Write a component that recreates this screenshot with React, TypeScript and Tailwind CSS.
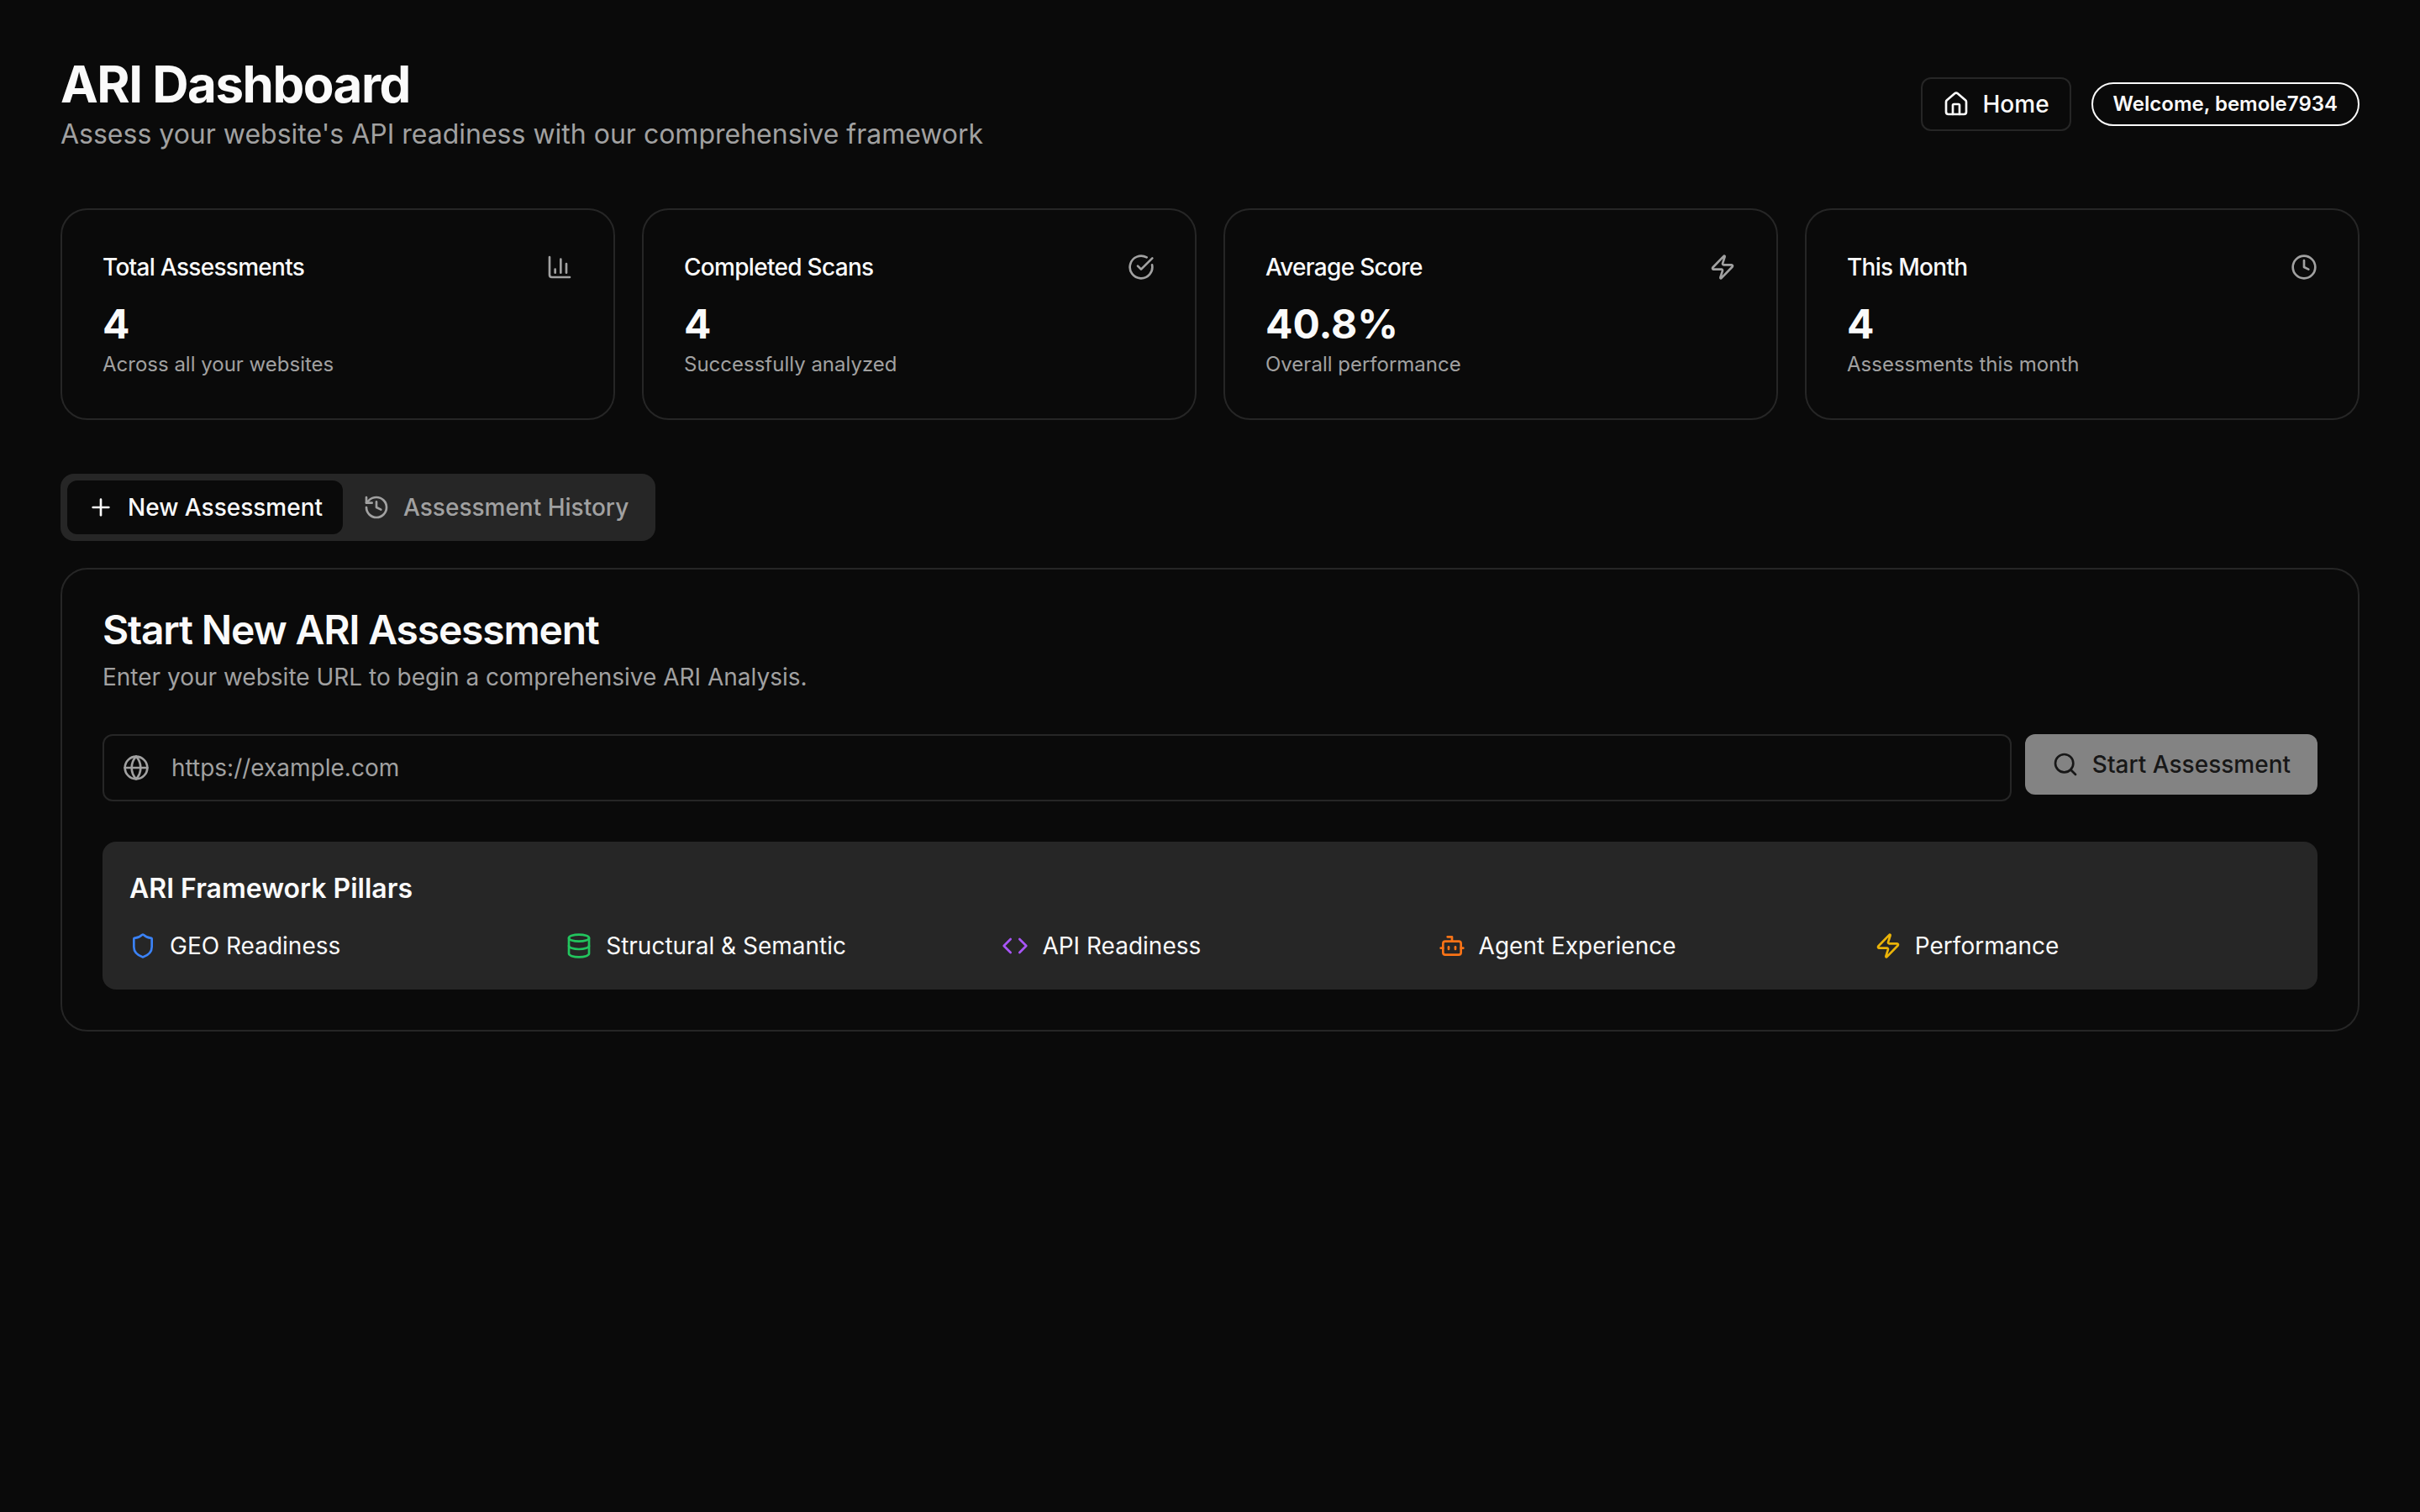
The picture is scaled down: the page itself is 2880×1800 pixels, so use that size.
import {
  Bot,
  ChartColumn,
  CircleCheckBig,
  Clock,
  Code,
  Database,
  Globe,
  History,
  House,
  Plus,
  Search,
  Shield,
  Zap,
} from "lucide-react";

const STATS = [
  { title: "Total Assessments", value: "4", note: "Across all your websites", icon: ChartColumn },
  { title: "Completed Scans", value: "4", note: "Successfully analyzed", icon: CircleCheckBig },
  { title: "Average Score", value: "40.8%", note: "Overall performance", icon: Zap },
  { title: "This Month", value: "4", note: "Assessments this month", icon: Clock },
];

const PILLARS = [
  { label: "GEO Readiness", icon: Shield, color: "text-[#3b82f6]" },
  { label: "Structural & Semantic", icon: Database, color: "text-[#22c55e]" },
  { label: "API Readiness", icon: Code, color: "text-[#a855f7]" },
  { label: "Agent Experience", icon: Bot, color: "text-[#f97316]" },
  { label: "Performance", icon: Zap, color: "text-[#eab308]" },
];

export default function App() {
  return (
    <div className="min-h-screen bg-[#0a0a0a] px-[72px] pt-[64px] font-['Inter',sans-serif] text-[#fafafa]">
      <header className="mb-[64px] flex items-center justify-between">
        <div>
          <h1 className="text-[60px] leading-[72px] font-bold tracking-[-1.5px]">ARI Dashboard</h1>
          <p className="text-[32px] leading-[48px] text-[#a1a1a1]">
            Assess your website's API readiness with our comprehensive framework
          </p>
        </div>
        <div className="flex items-center gap-[24px]">
          <button className="flex h-[64px] items-center gap-[16px] rounded-[12px] border-2 border-[#262626] bg-[#0a0a0a] px-[24px] text-[28px] font-medium">
            <House className="size-[32px]" />
            Home
          </button>
          <div className="flex h-[52px] items-center rounded-full border-2 border-[#fafafa] px-[24px] text-[24px] font-semibold">
            Welcome, bemole7934
          </div>
        </div>
      </header>

      <section className="mb-[64px] grid grid-cols-4 gap-[32px]">
        {STATS.map((stat) => (
          <div key={stat.title} className="rounded-[32px] border-2 border-[#262626] p-[48px]">
            <div className="flex items-center justify-between">
              <h3 className="text-[28px] leading-[40px] font-medium tracking-[-0.7px]">{stat.title}</h3>
              <stat.icon className="size-[32px] text-[#a1a1a1]" />
            </div>
            <div className="mt-[20px] text-[48px] leading-[56px] font-bold">{stat.value}</div>
            <p className="mt-[4px] text-[24px] leading-[32px] text-[#a1a1a1]">{stat.note}</p>
          </div>
        ))}
      </section>

      <div className="mb-[32px] inline-flex h-[80px] items-center rounded-[16px] bg-[#262626] p-[8px] align-top text-[28px] font-medium">
        <button className="flex h-[64px] items-center gap-[16px] rounded-[12px] bg-[#0a0a0a] px-[24px]">
          <Plus className="size-[32px]" />
          New Assessment
        </button>
        <button className="flex h-[64px] items-center gap-[16px] px-[24px] text-[#a1a1a1]">
          <History className="size-[32px]" />
          Assessment History
        </button>
      </div>

      <section className="rounded-[32px] border-2 border-[#262626] p-[48px]">
        <h2 className="text-[48px] leading-[48px] font-semibold tracking-[-1.2px]">Start New ARI Assessment</h2>
        <p className="mt-[12px] text-[28px] leading-[40px] text-[#a1a1a1]">
          Enter your website URL to begin a comprehensive ARI Analysis.
        </p>

        <div className="mt-[48px] flex items-start gap-[16px]">
          <div className="flex h-[80px] flex-1 items-center gap-[26px] rounded-[12px] border-2 border-[#262626] pr-[24px] pl-[22px] text-[28px] text-[#a1a1a1]">
            <Globe className="size-[32px]" />
            https://example.com
          </div>
          <button className="flex h-[72px] items-center gap-[16px] rounded-[12px] bg-[#838383] px-[32px] text-[28px] font-medium text-[#171717]">
            <Search className="size-[32px]" />
            Start Assessment
          </button>
        </div>

        <div className="mt-[48px] rounded-[16px] bg-[#262626] p-[32px]">
          <h4 className="text-[32px] leading-[48px] font-semibold">ARI Framework Pillars</h4>
          <div className="mt-[24px] grid grid-cols-5 gap-[24px]">
            {PILLARS.map((pillar) => (
              <div key={pillar.label} className="flex items-center gap-[16px] text-[28px] leading-[40px]">
                <pillar.icon className={`size-[32px] ${pillar.color}`} />
                {pillar.label}
              </div>
            ))}
          </div>
        </div>
      </section>
    </div>
  );
}
